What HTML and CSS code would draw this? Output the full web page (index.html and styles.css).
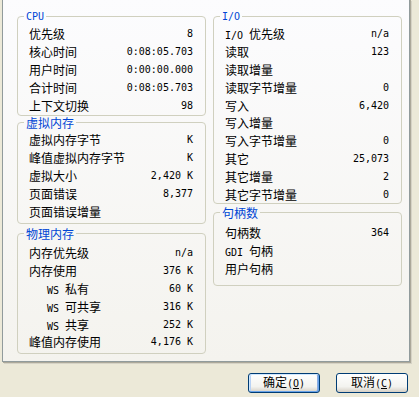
FILE: index.html
```html
<!DOCTYPE html>
<html lang="zh-CN">
<head>
  <meta charset="UTF-8" />
  <title>属性 - 性能</title>
  <link rel="stylesheet" href="styles.css">
</head>
<body>
  <div class="dialog">
    <div class="page">
      <div class="col">
        <fieldset class="group cpu">
          <legend><span class="en">CPU</span></legend>
          <div class="row"><span>优先级</span><span class="v">8</span></div>
          <div class="row"><span>核心时间</span><span class="v">0:08:05.703</span></div>
          <div class="row"><span>用户时间</span><span class="v">0:00:00.000</span></div>
          <div class="row"><span>合计时间</span><span class="v">0:08:05.703</span></div>
          <div class="row"><span>上下文切换</span><span class="v">98</span></div>
        </fieldset>
        <fieldset class="group vm">
          <legend>虚拟内存</legend>
          <div class="row"><span>虚拟内存字节</span><span class="v">K</span></div>
          <div class="row"><span>峰值虚拟内存字节</span><span class="v">K</span></div>
          <div class="row"><span>虚拟大小</span><span class="v">2,420 K</span></div>
          <div class="row"><span>页面错误</span><span class="v">8,377</span></div>
          <div class="row"><span>页面错误增量</span><span class="v"></span></div>
        </fieldset>
        <fieldset class="group pm">
          <legend>物理内存</legend>
          <div class="row"><span>内存优先级</span><span class="v">n/a</span></div>
          <div class="row"><span>内存使用</span><span class="v">376 K</span></div>
          <div class="row sub"><span><span class="en">WS </span>私有</span><span class="v">60 K</span></div>
          <div class="row sub"><span><span class="en">WS </span>可共享</span><span class="v">316 K</span></div>
          <div class="row sub"><span><span class="en">WS </span>共享</span><span class="v">252 K</span></div>
          <div class="row"><span>峰值内存使用</span><span class="v">4,176 K</span></div>
        </fieldset>
      </div>
      <div class="col">
        <fieldset class="group io">
          <legend><span class="en">I/O</span></legend>
          <div class="row"><span><span class="en">I/O </span>优先级</span><span class="v">n/a</span></div>
          <div class="row"><span>读取</span><span class="v">123</span></div>
          <div class="row"><span>读取增量</span><span class="v"></span></div>
          <div class="row"><span>读取字节增量</span><span class="v">0</span></div>
          <div class="row"><span>写入</span><span class="v">6,420</span></div>
          <div class="row"><span>写入增量</span><span class="v"></span></div>
          <div class="row"><span>写入字节增量</span><span class="v">0</span></div>
          <div class="row"><span>其它</span><span class="v">25,073</span></div>
          <div class="row"><span>其它增量</span><span class="v">2</span></div>
          <div class="row"><span>其它字节增量</span><span class="v">0</span></div>
        </fieldset>
        <fieldset class="group handles">
          <legend>句柄数</legend>
          <div class="row"><span>句柄数</span><span class="v">364</span></div>
          <div class="row"><span><span class="en">GDI </span>句柄</span><span class="v"></span></div>
          <div class="row"><span>用户句柄</span><span class="v"></span></div>
        </fieldset>
      </div>
    </div>
    <div class="buttons">
      <button class="btn default">确定<span class="en">(<u>O</u>)</span></button>
      <button class="btn">取消<span class="en">(<u>C</u>)</span></button>
    </div>
  </div>
</body>
</html>
```

FILE: styles.css
```css
*{box-sizing:border-box;margin:0;padding:0;}
body{width:419px;height:397px;overflow:hidden;background:#ece9d8;color:#000;font:12px "Noto Sans CJK SC","Liberation Sans",sans-serif;}
.dialog{height:397px;display:flex;flex-direction:column;}
/* tab page */
.page{margin:-1px 9px 0 2px;height:363px;border:1px solid #919b9c;border-top:none;background:linear-gradient(#fcfcfe,#f4f3ee);box-shadow:1px 1px 0 #aca899,2px 2px 0 #d6d3c6;display:flex;gap:7px;padding:8px 0 0 14px;}
.col{width:189px;display:flex;flex-direction:column;}
.en{font-family:"DejaVu Sans Mono","Liberation Mono",monospace;font-size:10px;white-space:pre;}
/* group boxes */
.group{border:1px solid #d0d0bf;border-radius:4px;padding:0 12px 2px 11px;min-width:0;}
.group legend{margin-left:-5px;padding:0 2px;line-height:16px;color:#0046d5;}
.group.cpu{padding-bottom:1px;}
.group.vm{margin-top:-1px;padding-bottom:3px;}
.group.pm{margin-top:2px;padding-top:2px;}
.group.io{padding-bottom:0;}
.group.handles{margin-top:1px;padding-top:3px;padding-bottom:8px;}
.row{display:flex;justify-content:space-between;align-items:center;height:17.8px;white-space:nowrap;}
.row.sub{padding-left:18px;}
.v{font-family:"DejaVu Sans Mono","Liberation Mono",monospace;font-size:10px;white-space:pre;}
/* dialog buttons */
.buttons{display:flex;justify-content:flex-end;gap:16px;padding:0 11px 0 0;margin-top:11px;}
.btn{width:72px;height:20px;border:1px solid #003c74;border-radius:3px;background:linear-gradient(#fff,#f3f3ef 70%,#d6d0c5);font:12px "Noto Sans CJK SC","Liberation Sans",sans-serif;color:#000;line-height:16px;}
.btn.default{box-shadow:inset 1px 1px 0 #cee7ff,inset -1px -1px 0 #69a3e9,inset 2px 0 0 #b8d2f5,inset -2px 0 0 #89ade4;}
.btn u{text-decoration:underline;}
```
